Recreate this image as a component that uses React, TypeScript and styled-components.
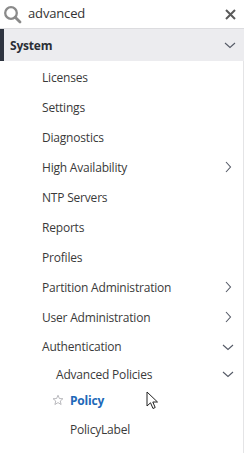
import React from "react";
import styled, { createGlobalStyle } from "styled-components";

const Global = createGlobalStyle`
  html, body { margin: 0; padding: 0; background: #fff; }
  body { font-family: "Open Sans", "Noto Sans", "Liberation Sans", sans-serif; }
`;

const Panel = styled.div`
  width: 244px;
  height: 453px;
  overflow: hidden;
  background: #fff;
  display: flex;
  flex-direction: column;
`;

const SearchBar = styled.div`
  height: 28px;
  display: flex;
  align-items: center;
  padding: 0 8px 0 3px;
  border-bottom: 1px solid #dcdcdf;
  gap: 6px;
`;

const SearchInput = styled.div`
  flex: 1;
  font-size: 13px;
  letter-spacing: -0.15px;
  color: #333;
  margin-top: -2px;
`;

const Header = styled.div`
  height: 32px;
  display: flex;
  align-items: center;
  background: #ececef;
  border-left: 4px solid #2e3440;
  padding: 0 8px 0 6px;
`;

const HeaderTitle = styled.div`
  flex: 1;
  font-size: 12px;
  font-weight: 700;
  letter-spacing: -0.2px;
  color: #2b2f36;
`;

const List = styled.div`
  flex: 1;
  display: flex;
  flex-direction: column;
  border-right: 1px solid #e4e4e6;
  padding-top: 1px;
`;

const Row = styled.div<{ $indent: number; $h: number }>`
  height: ${(p) => p.$h}px;
  display: flex;
  align-items: center;
  padding-left: ${(p) => p.$indent}px;
  padding-right: 9px;
  position: relative;
`;

const Label = styled.div<{ $active?: boolean }>`
  flex: 1;
  font-size: 12px;
  letter-spacing: -0.2px;
  color: ${(p) => (p.$active ? "#2068b8" : "#3a3a3a")};
  font-weight: ${(p) => (p.$active ? 700 : 400)};
`;

const StarSlot = styled.span`
  position: absolute;
  left: 52px;
  top: 50%;
  transform: translateY(-50%);
  display: flex;
`;

const Cursor = styled.svg`
  position: absolute;
  left: 146px;
  top: 391px;
`;

const Chevron = ({ dir }: { dir: "down" | "right" }) => (
  <svg width="12" height="12" viewBox="0 0 12 12">
    {dir === "down" ? (
      <path d="M1 4 L6 8.5 L11 4" fill="none" stroke="#555a66" strokeWidth="1.1" />
    ) : (
      <path d="M4 1 L8.5 6 L4 11" fill="none" stroke="#555a66" strokeWidth="1.1" />
    )}
  </svg>
);

type Item = { label: string; indent: number; h: number; chevron?: "down" | "right"; active?: boolean };

const items: Item[] = [
  { label: "Licenses", indent: 42, h: 30 },
  { label: "Settings", indent: 42, h: 30 },
  { label: "Diagnostics", indent: 42, h: 30 },
  { label: "High Availability", indent: 42, h: 30, chevron: "right" },
  { label: "NTP Servers", indent: 42, h: 30 },
  { label: "Reports", indent: 42, h: 30 },
  { label: "Profiles", indent: 42, h: 30 },
  { label: "Partition Administration", indent: 42, h: 30, chevron: "right" },
  { label: "User Administration", indent: 42, h: 30, chevron: "right" },
  { label: "Authentication", indent: 42, h: 29, chevron: "down" },
  { label: "Advanced Policies", indent: 56, h: 26, chevron: "down" },
  { label: "Policy", indent: 70, h: 26, active: true },
  { label: "PolicyLabel", indent: 70, h: 32 },
];

export default function App() {
  return (
    <>
      <Global />
      <Panel>
        <SearchBar>
          <svg width="19" height="19" viewBox="0 0 19 19">
            <circle cx="8" cy="8" r="5.8" fill="none" stroke="#8a8a8a" strokeWidth="2.3" />
            <path d="M12.2 12.2 L17 17" stroke="#8a8a8a" strokeWidth="2.8" strokeLinecap="round" />
          </svg>
          <SearchInput>advanced</SearchInput>
          <svg width="11" height="11" viewBox="0 0 11 11">
            <path d="M1 1 L10 10 M10 1 L1 10" stroke="#5a5a5a" strokeWidth="2" />
          </svg>
        </SearchBar>
        <Header>
          <HeaderTitle>System</HeaderTitle>
          <Chevron dir="down" />
        </Header>
        <List>
          {items.map((it) => (
            <Row key={it.label} $indent={it.indent} $h={it.h}>
              {it.active && (
                <StarSlot>
                  <svg width="12" height="12" viewBox="0 0 24 24">
                    <path
                      d="M12 2.5 L14.8 9 L21.8 9.5 L16.5 14 L18.2 21 L12 17.2 L5.8 21 L7.5 14 L2.2 9.5 L9.2 9 Z"
                      fill="none"
                      stroke="#a8a8ad"
                      strokeWidth="1.6"
                      strokeLinejoin="round"
                    />
                  </svg>
                </StarSlot>
              )}
              <Label $active={it.active}>{it.label}</Label>
              {it.chevron && <Chevron dir={it.chevron} />}
            </Row>
          ))}
        </List>
      </Panel>
      <Cursor width="14" height="20" viewBox="0 0 14 20">
        <path
          d="M1 1 L1 15 L4.5 11.8 L7 17.5 L9.2 16.5 L6.8 11 L11.5 11 Z"
          fill="#fff"
          stroke="#222"
          strokeWidth="1"
          strokeLinejoin="miter"
        />
      </Cursor>
    </>
  );
}
